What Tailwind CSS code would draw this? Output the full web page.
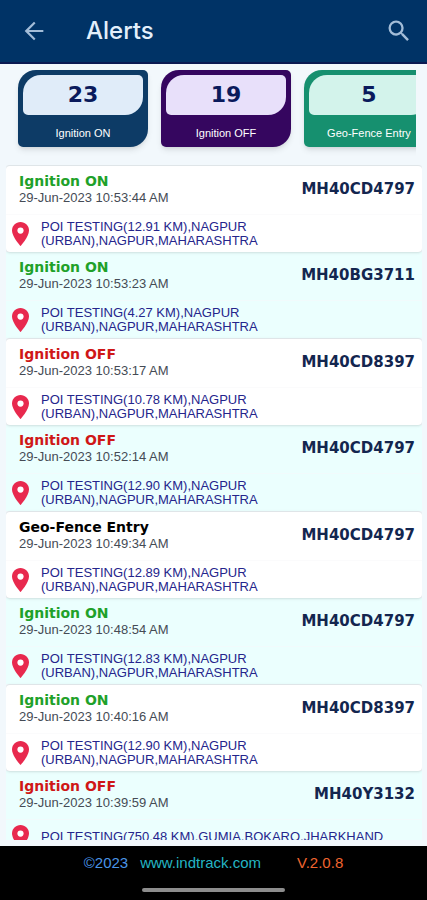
<!DOCTYPE html>
<html lang="en">
<head>
    <meta charset="UTF-8">
    <meta name="viewport" content="width=device-width, initial-scale=1.0">
    <title>Alerts</title>
    <script src="https://cdn.jsdelivr.net/npm/@tailwindcss/browser@4"></script>
</head>
<body class="h-screen flex flex-col overflow-hidden bg-[#f2f8fc] font-['Liberation_Sans',Arial,sans-serif]">
    <header class="shrink-0 flex items-center h-16 pl-4 pr-[14px] bg-[#003366] border-b-2 border-[#0a1a52]">
        <button type="button" aria-label="Back" class="p-1 text-[#a3bdd8]">
            <svg class="size-7" viewBox="0 0 24 24" fill="currentColor"><path d="M20 11.1H7.6l5.7-5.7L12 4l-8 8 8 8 1.3-1.4-5.7-5.7H20z"/></svg>
        </button>
        <h1 class="flex-1 ml-[34px] text-2xl font-medium text-[#e3effb] font-['Inter',sans-serif]">Alerts</h1>
        <button type="button" aria-label="Search" class="text-[#a3bdd8]">
            <svg class="size-7" viewBox="0 0 24 24" fill="currentColor"><path d="M15.5 14h-.79l-.28-.27A6.471 6.471 0 0 0 16 9.5 6.5 6.5 0 1 0 9.5 16c1.61 0 3.09-.59 4.23-1.57l.27.28v.79l5 4.99L20.49 19l-4.99-5zm-6 0C7.01 14 5 11.99 5 9.5S7.01 5 9.5 5 14 7.01 14 9.5 11.99 14 9.5 14z"/></svg>
        </button>
    </header>

    <!-- Alert totals, scrolls sideways -->
    <section class="shrink-0 ml-2 mr-[11px] pl-[10px] pt-[6px] pb-[18px] flex gap-[13px] overflow-hidden text-center">
        <button type="button" class="shrink-0 w-[130px] h-[77px] p-[5px] rounded-[5px] rounded-tl-[18px] rounded-br-[18px] bg-[#0d3b66] shadow-md">
            <span class="block h-10 rounded-[5px] rounded-tl-[18px] rounded-br-[18px] bg-[#e0ecf9] font-['DejaVu_Sans',sans-serif] text-[22px] leading-10 font-bold text-[#0a1a5c]">23</span>
            <span class="block pt-2 text-[11px] leading-5 text-white">Ignition ON</span>
        </button>
        <button type="button" class="shrink-0 w-[130px] h-[77px] p-[5px] rounded-[5px] rounded-tl-[18px] rounded-br-[18px] bg-[#35065f] shadow-md">
            <span class="block h-10 rounded-[5px] rounded-tl-[18px] rounded-br-[18px] bg-[#e8e0fa] font-['DejaVu_Sans',sans-serif] text-[22px] leading-10 font-bold text-[#0a1a5c]">19</span>
            <span class="block pt-2 text-[11px] leading-5 text-white">Ignition OFF</span>
        </button>
        <button type="button" class="shrink-0 w-[130px] h-[77px] p-[5px] rounded-[5px] rounded-tl-[18px] rounded-br-[18px] bg-[#16906f] shadow-md">
            <span class="block h-10 rounded-[5px] rounded-tl-[18px] rounded-br-[18px] bg-[#d3f3eb] font-['DejaVu_Sans',sans-serif] text-[22px] leading-10 font-bold text-[#0a1a5c]">5</span>
            <span class="block pt-2 text-[11px] leading-5 text-white">Geo-Fence Entry</span>
        </button>
    </section>

    <main class="flex-1 min-h-0 pl-[6px] pr-[5px] pb-[6px] bg-[#f2f8fc]">
        <ul id="alert-list" class="h-full overflow-hidden"></ul>
    </main>

    <template id="alert-row">
        <li class="odd:relative odd:bg-white odd:border-t odd:border-[#dfe5e8] first:border-white even:bg-[#ebfffe] odd:shadow odd:rounded-sm">
            <div class="flex justify-between pt-[7px] pb-[7px] pl-[13px] pr-[7px]">
                <div>
                    <h2 class="font-['DejaVu_Sans',sans-serif] text-[14px] leading-4 font-bold"></h2>
                    <p class="date text-[13px] leading-[18px] text-[#454b55]"></p>
                </div>
                <p class="plate font-['DejaVu_Sans',sans-serif] text-[15px] leading-8 font-bold text-[#13264f]"></p>
            </div>
            <div class="flex items-center pt-[5px] pb-1 pl-[6px] border-t border-[#f7f7fa]/50">
                <svg class="shrink-0 w-[17px] h-6" viewBox="0 0 17 24"><path fill="#e8294e" d="M8.500 0C3.800 0 0 3.700 0 8.400C0 14.600 8.500 24 8.500 24S17 14.600 17 8.400C17 3.700 13.200 0 8.500 0z"/><circle cx="8.500" cy="8.600" r="3.100" fill="#fff"/></svg>
                <p class="address ml-3 text-[13px] leading-[14px] whitespace-pre-line text-[#25258c]"></p>
            </div>
        </li>
    </template>

    <footer class="shrink-0 h-[54px] bg-black">
        <div class="flex justify-center items-center pt-2 text-[15px] leading-[18px]">
            <span class="text-[#4a94e6]">©2023</span>
            <a href="#" class="ml-3 text-[#24b5c4]">www.indtrack.com</a>
            <span class="ml-9 text-[#f0652f]">V.2.0.8</span>
        </div>
        <div class="mx-auto mt-4 w-1/3 h-1 rounded-full bg-[#8d8d8d]"></div>
    </footer>

    <script>
        var alertColors = {
            'Ignition ON': 'text-[#1fa12a]',
            'Ignition OFF': 'text-[#cf1717]',
            'Geo-Fence Entry': 'text-black'
        };
        var nagpur = 'NAGPUR\n(URBAN),NAGPUR,MAHARASHTRA';
        var alerts = [
            ['Ignition ON', '10:53:44', 'MH40CD4797', '12.91', nagpur],
            ['Ignition ON', '10:53:23', 'MH40BG3711', '4.27', nagpur],
            ['Ignition OFF', '10:53:17', 'MH40CD8397', '10.78', nagpur],
            ['Ignition OFF', '10:52:14', 'MH40CD4797', '12.90', nagpur],
            ['Geo-Fence Entry', '10:49:34', 'MH40CD4797', '12.89', nagpur],
            ['Ignition ON', '10:48:54', 'MH40CD4797', '12.83', nagpur],
            ['Ignition ON', '10:40:16', 'MH40CD8397', '12.90', nagpur],
            ['Ignition OFF', '10:39:59', 'MH40Y3132', '750.48', 'GUMIA,BOKARO,JHARKHAND']
        ];
        var list = document.getElementById('alert-list');
        var template = document.getElementById('alert-row');

        alerts.forEach(function (alert) {
            var row = template.content.cloneNode(true);
            var title = row.querySelector('h2');
            title.textContent = alert[0];
            title.classList.add(alertColors[alert[0]]);
            row.querySelector('.date').textContent = '29-Jun-2023 ' + alert[1] + ' AM';
            row.querySelector('.plate').textContent = alert[2];
            row.querySelector('.address').textContent = 'POI TESTING(' + alert[3] + ' KM),' + alert[4];
            list.appendChild(row);
        });
    </script>
</body>
</html>
